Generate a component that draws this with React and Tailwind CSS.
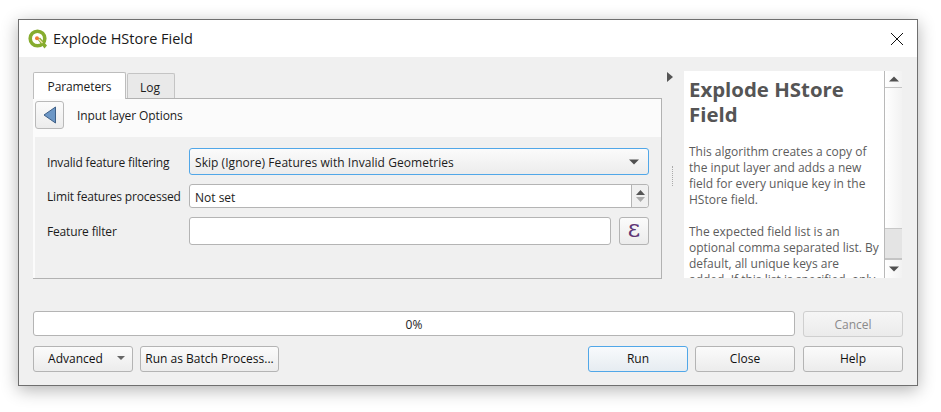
const font = { fontFamily: '"Open Sans", "Noto Sans", sans-serif' }

const QgisLogo = () => (
  <svg width="20" height="20" viewBox="0 0 20 20">
    <circle cx="9.5" cy="9.5" r="7.3" fill="none" stroke="#86ac2e" strokeWidth="3.6" />
    <path d="M9.5 10.5 L12 8.5 L19 16.5 L16.5 19.5 Z" fill="#86ac2e" />
    <path d="M10.2 9.6 L14.5 14" stroke="#f4e2b0" strokeWidth="1.4" />
    <circle cx="9" cy="9.2" r="2" fill="#ee7b35" />
  </svg>
)

const Button = ({ children, className = '', disabled, focus }) => (
  <button
    className={`h-[26px] rounded-[3px] border text-[12px] leading-none flex items-center justify-center ${
      focus
        ? 'border-[#51a7e8] bg-gradient-to-b from-[#f8fafc] to-[#e6ecf1] text-[#111]'
        : disabled
          ? 'border-[#cfcfcf] bg-gradient-to-b from-[#f6f6f6] to-[#ebebeb] text-[#8a8a8a]'
          : 'border-[#b4b4b4] bg-gradient-to-b from-[#fbfbfb] to-[#ececec] text-[#111]'
    } ${className}`}
  >
    {children}
  </button>
)

const FormRow = ({ label, children, className = '' }) => (
  <div className={`flex items-center ${className}`}>
    <div className="w-[143px] shrink-0 pl-[1px] pt-[2px] text-[12px] tracking-[-0.17px] text-[#1c1c1c]">{label}</div>
    {children}
  </div>
)

const HelpPanel = () => (
  <div className="w-[218px] h-[207px] flex">
    <div className="w-[200px] bg-white overflow-hidden pl-[5px] pr-[2px] pt-[6px] text-[#5c5c5c]">
      <h1 className="text-[20.4px] leading-[25px] font-bold text-[#555]">Explode HStore Field</h1>
      <p className="text-[12px] leading-[16px] mt-[17px]">
        This algorithm creates a copy of the input layer and adds a new field for every unique key in the HStore field.
      </p>
      <p className="text-[12px] leading-[16px] mt-[16px]">
        The expected field list is an optional comma separated list. By default, all unique keys are<br />
        added. If this list is specified, only these fields are added.
      </p>
    </div>
    <div className="w-[18px] flex flex-col border-l border-[#b9b9b9] bg-gradient-to-r from-white to-[#f2f2f2]">
      <div className="h-[17px] border-b border-[#c4c4c4] flex items-center justify-center">
        <svg width="10" height="6"><path d="M0 5.5 L5 0.5 L10 5.5 Z" fill="#505050" /></svg>
      </div>
      <div className="flex-1" />
      <div className="h-[32px] bg-[#e4e4e4] border-t border-[#c8c8c8] border-b-2 border-b-[#c4c4c4]" />
      <div className="h-[18px] flex items-center justify-center">
        <svg width="10" height="6"><path d="M0 0.5 L10 0.5 L5 5.5 Z" fill="#505050" /></svg>
      </div>
    </div>
  </div>
)

export default function App() {
  return (
    <div className="w-[941px] h-[412px] bg-white pt-[19px] pl-[18px] overflow-hidden" style={font}>
      <div className="w-[900px] h-[367px] border border-[#6f6f6f] bg-[#f0f0f0] shadow-[0_4px_16px_rgba(0,0,0,0.3)] flex flex-col">
        {/* Title bar */}
        <div className="h-[37px] bg-white flex items-center pl-[9px] pr-[13px] shrink-0">
          <QgisLogo />
          <span className="ml-[5px] text-[14.5px] text-[#1a1a1a]">Explode HStore Field</span>
          <svg className="ml-auto" width="14" height="14" viewBox="0 0 14 14">
            <path d="M1 1 L13 13 M13 1 L1 13" stroke="#111" strokeWidth="1" fill="none" />
          </svg>
        </div>

        <div className="flex pt-[14px] pl-[14px] pr-[15px] shrink-0">
          {/* Left column with tabs */}
          <div className="w-[629px] shrink-0">
            <div className="flex items-end h-[27px]">
              <div className="w-[93px] h-[27px] bg-white border border-b-0 border-[#bdbdbd] rounded-t-[2px] flex items-center justify-center text-[12px] tracking-[-0.1px] text-[#1c1c1c] relative top-[1px] z-10 pt-[1px]">
                Parameters
              </div>
              <div className="w-[48px] h-[25px] ml-[1px] bg-[#e9e9e9] border border-b-0 border-[#c4c4c4] rounded-t-[2px] flex items-center justify-center text-[12px] text-[#1c1c1c] pt-[3px] pr-[2px]">
                Log
              </div>
            </div>
            <div className="h-[181px] border-t border-r border-b border-[#b2b2b2] pl-[2px] bg-[#fbfbfb] flex flex-col">
              <div className="h-[38px] bg-[#fbfbfb] flex items-center shrink-0">
                <button className="w-[29px] h-[28px] -mt-[6px] rounded-[3px] border border-[#b9b9b9] bg-gradient-to-b from-[#fbfbfb] to-[#ececec] flex items-center justify-center">
                  <svg width="14" height="18" viewBox="0 0 14 18">
                    <path d="M12.5 1 L1 9 L12.5 17 Z" fill="#6c97c6" stroke="#3e5f86" strokeWidth="1" />
                  </svg>
                </button>
                <span className="ml-[13px] -mt-[5px] text-[12px] tracking-[-0.1px] text-[#1c1c1c]">Input layer Options</span>
              </div>
              <div className="flex-1 bg-[#f0f0f0] pl-[11px] pr-[12px] pt-[11px]">
                <FormRow label="Invalid feature filtering">
                  <div className="flex-1 h-[27px] rounded-[3px] border border-[#51a7e8] bg-gradient-to-b from-[#fbfbfb] to-[#ececec] flex items-center pl-[5px] pr-[9px] pt-[2px] text-[12px] tracking-[0.05px] text-[#1c1c1c]">
                    Skip (Ignore) Features with Invalid Geometries
                    <svg className="ml-auto -mt-[2px]" width="10" height="6"><path d="M0 0.5 L10 0.5 L5 5.5 Z" fill="#505050" /></svg>
                  </div>
                </FormRow>
                <FormRow label="Limit features processed" className="mt-[9px]">
                  <div className="flex-1 h-[24px] rounded-[3px] border border-[#b4b4b4] bg-white flex items-center pl-[5px] text-[12px] text-[#1c1c1c]">
                    <span className="pt-[3px]">Not set</span>
                    <div className="ml-auto w-[17px] h-full border-l border-[#b4b4b4] bg-[#f0f0f0] rounded-r-[3px] flex flex-col items-center justify-center gap-[2px]">
                      <svg width="9" height="5"><path d="M0 5 L4.5 0 L9 5 Z" fill="#555" /></svg>
                      <svg width="9" height="5"><path d="M0 0 L9 0 L4.5 5 Z" fill="#aaa" /></svg>
                    </div>
                  </div>
                </FormRow>
                <FormRow label="Feature filter" className="mt-[9px]">
                  <div className="flex-1 h-[28px] rounded-[3px] border border-[#b4b4b4] bg-white" />
                  <Button className="w-[30px] !h-[28px] ml-[8px] !text-[24px] !text-[#5f3575]">
                    <span className="-mt-[4px]" style={{ fontFamily: '"DejaVu Serif", serif' }}>ε</span>
                  </Button>
                </FormRow>
              </div>
            </div>
          </div>

          {/* Collapse handle */}
          <div className="w-[22px] shrink-0 flex flex-col items-center relative">
            <svg className="mt-[1px] -ml-[6px]" width="6" height="10"><path d="M0 0 L6 5 L0 10 Z" fill="#555" /></svg>
            <div className="mt-[84px] -ml-[2px] h-[20px] border-l border-dotted border-[#aaa]" />
          </div>

          <HelpPanel />
        </div>

        <div className="mt-auto pl-[14px] pr-[14px] pb-[13px] flex flex-col gap-[9px]">
          <div className="flex gap-[8px]">
            <div className="flex-1 h-[25px] rounded-[3px] border border-[#b4b4b4] bg-white flex items-center justify-center pt-[2px] text-[12px] text-[#1c1c1c]">
              0%
            </div>
            <Button disabled className="w-[100px] pt-[2px]">Cancel</Button>
          </div>
          <div className="flex">
            <Button className="w-[100px] relative">
              <span className="mr-[15px]">Advanced</span>
              <svg className="absolute right-[7px] top-[9px]" width="8" height="4"><path d="M0 0 L8 0 L4 4 Z" fill="#666" /></svg>
            </Button>
            <Button className="w-[139px] ml-[7px]">Run as Batch Process...</Button>
            <Button focus className="w-[100px] ml-auto">Run</Button>
            <Button className="w-[100px] ml-[7px]">Close</Button>
            <Button className="w-[100px] ml-[8px]">Help</Button>
          </div>
        </div>
      </div>
    </div>
  )
}
